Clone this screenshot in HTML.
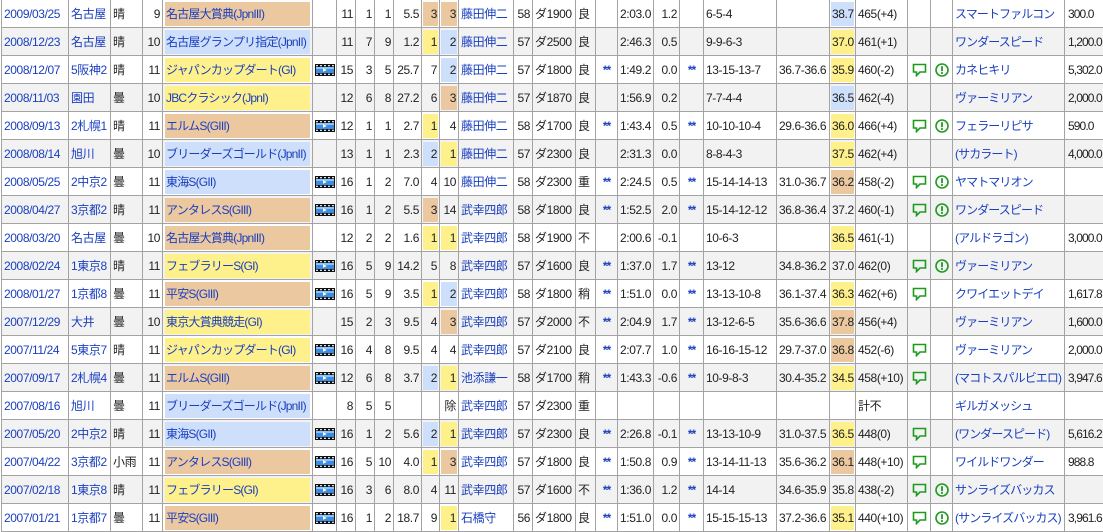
<!DOCTYPE html>
<html><head><meta charset="utf-8">
<style>
html,body{margin:0;padding:0;background:#fff;width:1103px;height:528px;overflow:hidden}
table{position:absolute;left:1px;top:-1px;border-collapse:collapse;table-layout:fixed;width:1110px;
font-family:"Liberation Sans","Noto Sans CJK JP",sans-serif;font-size:12px;color:#222;letter-spacing:-0.4px}
td{border:1px solid #a3a3a3;height:27px;padding:0 2px;white-space:nowrap;overflow:hidden;vertical-align:middle;text-align:right}
tr:nth-child(even) td{background:#f2f2f2}
td.l{text-align:left}td.c{text-align:center}
.a{color:#1a3fbf}
td.bx{padding:0 1px}
td.rn{padding:0 2px}
td.rn i{letter-spacing:-0.8px}
td.w{letter-spacing:-0.9px}
td.p{letter-spacing:-0.9px;padding:0 1px 0 3px}
i{display:block;font-style:normal;height:24px;line-height:24px;padding:0 1px}
.o{background:#ecc8a0}.b{background:#cddffa}.y{background:#fef08a}
.s{color:#1a3fbf;font-weight:bold;letter-spacing:-1px}
svg{display:block;margin:0 auto}
</style></head><body>
<svg width="0" height="0" style="position:absolute">
<defs>
<g id="v"><rect width="20" height="12" fill="#111"/><g fill="#ddd"><rect x="1" y="1" width="2" height="1.3"/><rect x="5" y="1" width="2" height="1.3"/><rect x="9" y="1" width="2" height="1.3"/><rect x="13" y="1" width="2" height="1.3"/><rect x="17" y="1" width="2" height="1.3"/><rect x="1" y="9.7" width="2" height="1.3"/><rect x="5" y="9.7" width="2" height="1.3"/><rect x="9" y="9.7" width="2" height="1.3"/><rect x="13" y="9.7" width="2" height="1.3"/><rect x="17" y="9.7" width="2" height="1.3"/></g><rect x="1" y="3" width="18" height="6" fill="#3a8ee8"/><rect x="1" y="3" width="18" height="2" fill="#8cc4f8"/><path d="M8 4.2L12 6 8 7.8Z" fill="#fff"/></g>
<g id="m"><path d="M1.5 1.5H13.5V9H8L4.5 12.5V9H1.5Z" fill="none" stroke="#1f9a1f" stroke-width="1.6"/></g>
<g id="x"><circle cx="7" cy="7" r="6" fill="none" stroke="#1f9a1f" stroke-width="1.6"/><rect x="6.1" y="3.2" width="1.8" height="5" fill="#1f9a1f"/><rect x="6.1" y="9.1" width="1.8" height="1.8" fill="#1f9a1f"/></g>
</defs></svg>
<table>
<colgroup><col style="width:67px"><col style="width:42px"><col style="width:32px"><col style="width:20px"><col style="width:150px"><col style="width:24px"><col style="width:19px"><col style="width:19px"><col style="width:19px"><col style="width:28px"><col style="width:18px"><col style="width:19px"><col style="width:55px"><col style="width:19px"><col style="width:43px"><col style="width:20px"><col style="width:22px"><col style="width:36px"><col style="width:26px"><col style="width:24px"><col style="width:73px"><col style="width:53px"><col style="width:26px"><col style="width:52px"><col style="width:23px"><col style="width:22px"><col style="width:112px"><col style="width:47px"></colgroup>
<tr><td class="l a">2009/03/25</td><td class="l a">名古屋</td><td class="l">晴</td><td>9</td><td class="l rn"><i class="o a">名古屋大賞典(JpnIII)</i></td><td></td><td>11</td><td>1</td><td>1</td><td>5.5</td><td class="bx"><i class="o">3</i></td><td class="bx"><i class="o">3</i></td><td class="l a">藤田伸二</td><td>58</td><td class="l">ダ1900</td><td class="l">良</td><td></td><td>2:03.0</td><td>1.2</td><td></td><td class="l">6-5-4</td><td></td><td class="bx"><i class="b">38.7</i></td><td class="l">465(+4)</td><td></td><td></td><td class="l a w">スマートファルコン</td><td class="l p">300.0</td></tr>
<tr><td class="l a">2008/12/23</td><td class="l a">名古屋</td><td class="l">晴</td><td>10</td><td class="l rn"><i class="b a">名古屋グランプリ指定(JpnII)</i></td><td></td><td>11</td><td>7</td><td>9</td><td>1.2</td><td class="bx"><i class="y">1</i></td><td class="bx"><i class="b">2</i></td><td class="l a">藤田伸二</td><td>57</td><td class="l">ダ2500</td><td class="l">良</td><td></td><td>2:46.3</td><td>0.5</td><td></td><td class="l">9-9-6-3</td><td></td><td class="bx"><i class="y">37.0</i></td><td class="l">461(+1)</td><td></td><td></td><td class="l a w">ワンダースピード</td><td class="l p">1,200.0</td></tr>
<tr><td class="l a">2008/12/07</td><td class="l a">5阪神2</td><td class="l">晴</td><td>11</td><td class="l rn"><i class="y a">ジャパンカップダート(GI)</i></td><td><svg width="20" height="12"><use href="#v"/></svg></td><td>15</td><td>3</td><td>5</td><td>25.7</td><td>7</td><td class="bx"><i class="b">2</i></td><td class="l a">藤田伸二</td><td>57</td><td class="l">ダ1800</td><td class="l">良</td><td class="c s">**</td><td>1:49.2</td><td>0.0</td><td class="c s">**</td><td class="l">13-15-13-7</td><td class="l">36.7-36.6</td><td class="bx"><i class="y">35.9</i></td><td class="l">460(-2)</td><td><svg width="15" height="14"><use href="#m"/></svg></td><td><svg width="14" height="14"><use href="#x"/></svg></td><td class="l a w">カネヒキリ</td><td class="l p">5,302.0</td></tr>
<tr><td class="l a">2008/11/03</td><td class="l a">園田</td><td class="l">曇</td><td>10</td><td class="l rn"><i class="y a">JBCクラシック(JpnI)</i></td><td></td><td>12</td><td>6</td><td>8</td><td>27.2</td><td>6</td><td class="bx"><i class="o">3</i></td><td class="l a">藤田伸二</td><td>57</td><td class="l">ダ1870</td><td class="l">良</td><td></td><td>1:56.9</td><td>0.2</td><td></td><td class="l">7-7-4-4</td><td></td><td class="bx"><i class="b">36.5</i></td><td class="l">462(-4)</td><td></td><td></td><td class="l a w">ヴァーミリアン</td><td class="l p">2,000.0</td></tr>
<tr><td class="l a">2008/09/13</td><td class="l a">2札幌1</td><td class="l">晴</td><td>11</td><td class="l rn"><i class="o a">エルムS(GIII)</i></td><td><svg width="20" height="12"><use href="#v"/></svg></td><td>12</td><td>1</td><td>1</td><td>2.7</td><td class="bx"><i class="y">1</i></td><td>4</td><td class="l a">藤田伸二</td><td>58</td><td class="l">ダ1700</td><td class="l">良</td><td class="c s">**</td><td>1:43.4</td><td>0.5</td><td class="c s">**</td><td class="l">10-10-10-4</td><td class="l">29.6-36.6</td><td class="bx"><i class="y">36.0</i></td><td class="l">466(+4)</td><td><svg width="15" height="14"><use href="#m"/></svg></td><td><svg width="14" height="14"><use href="#x"/></svg></td><td class="l a w">フェラーリピサ</td><td class="l p">590.0</td></tr>
<tr><td class="l a">2008/08/14</td><td class="l a">旭川</td><td class="l">曇</td><td>10</td><td class="l rn"><i class="b a">ブリーダーズゴールド(JpnII)</i></td><td></td><td>13</td><td>1</td><td>1</td><td>2.3</td><td class="bx"><i class="b">2</i></td><td class="bx"><i class="y">1</i></td><td class="l a">藤田伸二</td><td>57</td><td class="l">ダ2300</td><td class="l">良</td><td></td><td>2:31.3</td><td>0.0</td><td></td><td class="l">8-8-4-3</td><td></td><td class="bx"><i class="y">37.5</i></td><td class="l">462(+4)</td><td></td><td></td><td class="l a w">(サカラート)</td><td class="l p">4,000.0</td></tr>
<tr><td class="l a">2008/05/25</td><td class="l a">2中京2</td><td class="l">曇</td><td>11</td><td class="l rn"><i class="b a">東海S(GII)</i></td><td><svg width="20" height="12"><use href="#v"/></svg></td><td>16</td><td>1</td><td>2</td><td>7.0</td><td>4</td><td>10</td><td class="l a">藤田伸二</td><td>58</td><td class="l">ダ2300</td><td class="l">重</td><td class="c s">**</td><td>2:24.5</td><td>0.5</td><td class="c s">**</td><td class="l">15-14-14-13</td><td class="l">31.0-36.7</td><td class="bx"><i class="o">36.2</i></td><td class="l">458(-2)</td><td><svg width="15" height="14"><use href="#m"/></svg></td><td><svg width="14" height="14"><use href="#x"/></svg></td><td class="l a w">ヤマトマリオン</td><td class="l p"></td></tr>
<tr><td class="l a">2008/04/27</td><td class="l a">3京都2</td><td class="l">晴</td><td>11</td><td class="l rn"><i class="o a">アンタレスS(GIII)</i></td><td><svg width="20" height="12"><use href="#v"/></svg></td><td>16</td><td>1</td><td>2</td><td>5.5</td><td class="bx"><i class="o">3</i></td><td>14</td><td class="l a">武幸四郎</td><td>58</td><td class="l">ダ1800</td><td class="l">良</td><td class="c s">**</td><td>1:52.5</td><td>2.0</td><td class="c s">**</td><td class="l">15-14-12-12</td><td class="l">36.8-36.4</td><td>37.2</td><td class="l">460(-1)</td><td><svg width="15" height="14"><use href="#m"/></svg></td><td><svg width="14" height="14"><use href="#x"/></svg></td><td class="l a w">ワンダースピード</td><td class="l p"></td></tr>
<tr><td class="l a">2008/03/20</td><td class="l a">名古屋</td><td class="l">曇</td><td>10</td><td class="l rn"><i class="o a">名古屋大賞典(JpnIII)</i></td><td></td><td>12</td><td>2</td><td>2</td><td>1.6</td><td class="bx"><i class="y">1</i></td><td class="bx"><i class="y">1</i></td><td class="l a">武幸四郎</td><td>58</td><td class="l">ダ1900</td><td class="l">不</td><td></td><td>2:00.6</td><td>-0.1</td><td></td><td class="l">10-6-3</td><td></td><td class="bx"><i class="y">36.5</i></td><td class="l">461(-1)</td><td></td><td></td><td class="l a w">(アルドラゴン)</td><td class="l p">3,000.0</td></tr>
<tr><td class="l a">2008/02/24</td><td class="l a">1東京8</td><td class="l">晴</td><td>11</td><td class="l rn"><i class="y a">フェブラリーS(GI)</i></td><td><svg width="20" height="12"><use href="#v"/></svg></td><td>16</td><td>5</td><td>9</td><td>14.2</td><td>5</td><td>8</td><td class="l a">武幸四郎</td><td>57</td><td class="l">ダ1600</td><td class="l">良</td><td class="c s">**</td><td>1:37.0</td><td>1.7</td><td class="c s">**</td><td class="l">13-12</td><td class="l">34.8-36.2</td><td>37.0</td><td class="l">462(0)</td><td><svg width="15" height="14"><use href="#m"/></svg></td><td><svg width="14" height="14"><use href="#x"/></svg></td><td class="l a w">ヴァーミリアン</td><td class="l p"></td></tr>
<tr><td class="l a">2008/01/27</td><td class="l a">1京都8</td><td class="l">曇</td><td>11</td><td class="l rn"><i class="o a">平安S(GIII)</i></td><td><svg width="20" height="12"><use href="#v"/></svg></td><td>16</td><td>5</td><td>9</td><td>3.5</td><td class="bx"><i class="y">1</i></td><td class="bx"><i class="b">2</i></td><td class="l a">武幸四郎</td><td>58</td><td class="l">ダ1800</td><td class="l">稍</td><td class="c s">**</td><td>1:51.0</td><td>0.0</td><td class="c s">**</td><td class="l">13-13-10-8</td><td class="l">36.1-37.4</td><td class="bx"><i class="y">36.3</i></td><td class="l">462(+6)</td><td><svg width="15" height="14"><use href="#m"/></svg></td><td></td><td class="l a w">クワイエットデイ</td><td class="l p">1,617.8</td></tr>
<tr><td class="l a">2007/12/29</td><td class="l a">大井</td><td class="l">曇</td><td>10</td><td class="l rn"><i class="y a">東京大賞典競走(GI)</i></td><td></td><td>15</td><td>2</td><td>3</td><td>9.5</td><td>4</td><td class="bx"><i class="o">3</i></td><td class="l a">武幸四郎</td><td>57</td><td class="l">ダ2000</td><td class="l">不</td><td class="c s">**</td><td>2:04.9</td><td>1.7</td><td class="c s">**</td><td class="l">13-12-6-5</td><td class="l">35.6-36.6</td><td class="bx"><i class="o">37.8</i></td><td class="l">456(+4)</td><td></td><td></td><td class="l a w">ヴァーミリアン</td><td class="l p">1,600.0</td></tr>
<tr><td class="l a">2007/11/24</td><td class="l a">5東京7</td><td class="l">晴</td><td>11</td><td class="l rn"><i class="y a">ジャパンカップダート(GI)</i></td><td><svg width="20" height="12"><use href="#v"/></svg></td><td>16</td><td>4</td><td>8</td><td>9.5</td><td>4</td><td>4</td><td class="l a">武幸四郎</td><td>57</td><td class="l">ダ2100</td><td class="l">良</td><td class="c s">**</td><td>2:07.7</td><td>1.0</td><td class="c s">**</td><td class="l">16-16-15-12</td><td class="l">29.7-37.0</td><td class="bx"><i class="o">36.8</i></td><td class="l">452(-6)</td><td><svg width="15" height="14"><use href="#m"/></svg></td><td></td><td class="l a w">ヴァーミリアン</td><td class="l p">2,000.0</td></tr>
<tr><td class="l a">2007/09/17</td><td class="l a">2札幌4</td><td class="l">曇</td><td>11</td><td class="l rn"><i class="o a">エルムS(GIII)</i></td><td><svg width="20" height="12"><use href="#v"/></svg></td><td>12</td><td>6</td><td>8</td><td>3.7</td><td class="bx"><i class="b">2</i></td><td class="bx"><i class="y">1</i></td><td class="l a">池添謙一</td><td>58</td><td class="l">ダ1700</td><td class="l">稍</td><td class="c s">**</td><td>1:43.3</td><td>-0.6</td><td class="c s">**</td><td class="l">10-9-8-3</td><td class="l">30.4-35.2</td><td class="bx"><i class="y">34.5</i></td><td class="l">458(+10)</td><td><svg width="15" height="14"><use href="#m"/></svg></td><td></td><td class="l a w">(マコトスパルビエロ)</td><td class="l p">3,947.6</td></tr>
<tr><td class="l a">2007/08/16</td><td class="l a">旭川</td><td class="l">曇</td><td>11</td><td class="l rn"><i class="b a">ブリーダーズゴールド(JpnII)</i></td><td></td><td>8</td><td>5</td><td>5</td><td></td><td></td><td>除</td><td class="l a">武幸四郎</td><td>57</td><td class="l">ダ2300</td><td class="l">重</td><td></td><td></td><td></td><td></td><td></td><td></td><td></td><td class="l">計不</td><td></td><td></td><td class="l a w">ギルガメッシュ</td><td class="l p"></td></tr>
<tr><td class="l a">2007/05/20</td><td class="l a">2中京2</td><td class="l">晴</td><td>11</td><td class="l rn"><i class="b a">東海S(GII)</i></td><td><svg width="20" height="12"><use href="#v"/></svg></td><td>16</td><td>1</td><td>2</td><td>5.6</td><td class="bx"><i class="b">2</i></td><td class="bx"><i class="y">1</i></td><td class="l a">武幸四郎</td><td>57</td><td class="l">ダ2300</td><td class="l">良</td><td class="c s">**</td><td>2:26.8</td><td>-0.1</td><td class="c s">**</td><td class="l">13-13-10-9</td><td class="l">31.0-37.5</td><td class="bx"><i class="y">36.5</i></td><td class="l">448(0)</td><td><svg width="15" height="14"><use href="#m"/></svg></td><td></td><td class="l a w">(ワンダースピード)</td><td class="l p">5,616.2</td></tr>
<tr><td class="l a">2007/04/22</td><td class="l a">3京都2</td><td class="l">小雨</td><td>11</td><td class="l rn"><i class="o a">アンタレスS(GIII)</i></td><td><svg width="20" height="12"><use href="#v"/></svg></td><td>16</td><td>5</td><td>10</td><td>4.0</td><td class="bx"><i class="y">1</i></td><td class="bx"><i class="o">3</i></td><td class="l a">武幸四郎</td><td>57</td><td class="l">ダ1800</td><td class="l">良</td><td class="c s">**</td><td>1:50.8</td><td>0.9</td><td class="c s">**</td><td class="l">13-14-11-13</td><td class="l">35.6-36.2</td><td class="bx"><i class="o">36.1</i></td><td class="l">448(+10)</td><td><svg width="15" height="14"><use href="#m"/></svg></td><td></td><td class="l a w">ワイルドワンダー</td><td class="l p">988.8</td></tr>
<tr><td class="l a">2007/02/18</td><td class="l a">1東京8</td><td class="l">晴</td><td>11</td><td class="l rn"><i class="y a">フェブラリーS(GI)</i></td><td><svg width="20" height="12"><use href="#v"/></svg></td><td>16</td><td>3</td><td>6</td><td>8.0</td><td>4</td><td>11</td><td class="l a">武幸四郎</td><td>57</td><td class="l">ダ1600</td><td class="l">不</td><td class="c s">**</td><td>1:36.0</td><td>1.2</td><td class="c s">**</td><td class="l">14-14</td><td class="l">34.6-35.9</td><td>35.8</td><td class="l">438(-2)</td><td><svg width="15" height="14"><use href="#m"/></svg></td><td><svg width="14" height="14"><use href="#x"/></svg></td><td class="l a w">サンライズバッカス</td><td class="l p"></td></tr>
<tr><td class="l a">2007/01/21</td><td class="l a">1京都7</td><td class="l">曇</td><td>11</td><td class="l rn"><i class="o a">平安S(GIII)</i></td><td><svg width="20" height="12"><use href="#v"/></svg></td><td>16</td><td>1</td><td>2</td><td>18.7</td><td>9</td><td class="bx"><i class="y">1</i></td><td class="l a">石橋守</td><td>56</td><td class="l">ダ1800</td><td class="l">良</td><td class="c s">**</td><td>1:51.0</td><td>0.0</td><td class="c s">**</td><td class="l">15-15-15-13</td><td class="l">37.2-36.6</td><td class="bx"><i class="y">35.1</i></td><td class="l">440(+10)</td><td><svg width="15" height="14"><use href="#m"/></svg></td><td><svg width="14" height="14"><use href="#x"/></svg></td><td class="l a w">(サンライズバッカス)</td><td class="l p">3,961.6</td></tr>
</table>
</body></html>
